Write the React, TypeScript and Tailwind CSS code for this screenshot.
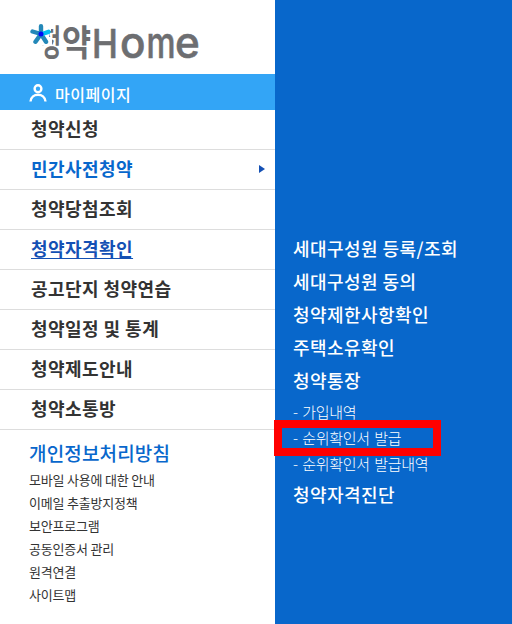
interface MenuItem {
  label: string;
  state?: 'hover' | 'active';
}

const menuItems: MenuItem[] = [
  { label: '청약신청' },
  { label: '민간사전청약', state: 'hover' },
  { label: '청약당첨조회' },
  { label: '청약자격확인', state: 'active' },
  { label: '공고단지 청약연습' },
  { label: '청약일정 및 통계' },
  { label: '청약제도안내' },
  { label: '청약소통방' },
];

const footerLinks = [
  '모바일 사용에 대한 안내',
  '이메일 추출방지정책',
  '보안프로그램',
  '공동인증서 관리',
  '원격연결',
  '사이트맵',
];

const subMenu = ['세대구성원 등록/조회', '세대구성원 동의', '청약제한사항확인', '주택소유확인', '청약통장'];

function Logo() {
  return (
    <svg width="180" height="68" viewBox="0 -14 180 68" className="block" fill="#6d6e71">
      <g fontFamily="'Noto Sans CJK KR', sans-serif" fontWeight="700">
        <text transform="translate(10.5 36) scale(0.62 1)" fontSize="36">청</text>
        <text transform="translate(32 36) scale(0.88 1)" fontSize="36">약</text>
      </g>
      <g fontFamily="Inter, sans-serif" fontWeight="500" stroke="#6d6e71" strokeWidth="0.6">
        <text transform="translate(62 38) scale(0.88 1)" fontSize="39.5">H</text>
        <text transform="translate(90 38) scale(0.98 1)" fontSize="43">o</text>
        <text transform="translate(116.5 38) scale(0.76 1)" fontSize="43">m</text>
        <text transform="translate(145 38) scale(0.98 1)" fontSize="43">e</text>
      </g>
      {/* Star replaces the first consonant */}
      <path d="M0 0H21V11H19V17H22V25H0Z" fill="#fff" />
      <g strokeWidth="4.4" strokeLinecap="round" fill="none">
        <path d="M11 14V6.2M11 14L2.5 11.5M11 14L5.5 21.8M11 14L16 21.8" stroke="#2388b8" />
        <path d="M12 14L18.6 11.8" stroke="#00bdf2" />
      </g>
      <circle cx="11" cy="14" r="2.5" fill="#0008f5" />
    </svg>
  );
}

function MenuRow({ label, state }: MenuItem) {
  const color =
    state === 'active' ? 'text-[#1450b4]' : state === 'hover' ? 'text-[#0867cc]' : 'text-[#333]';
  return (
    <li className="flex h-10 items-center justify-between border-b border-[#ddd] pr-[10px] pl-[31px]">
      <span
        className={`pb-[3px] text-[18px] leading-[26px] font-bold tracking-[0.45px] whitespace-nowrap ${color} ${
          state === 'active' ? 'underline decoration-1 underline-offset-2' : ''
        }`}
      >
        {label}
      </span>
      {state === 'hover' && (
        <svg width="6" height="8" viewBox="0 0 6 8" className="mb-px">
          <path d="M0 0L6 4L0 8Z" fill="#1450b4" />
        </svg>
      )}
    </li>
  );
}

export default function App() {
  return (
    <div className="flex h-[624px] w-[512px] overflow-hidden bg-white font-['Noto_Sans_CJK_KR',sans-serif]">
      <nav className="w-[275px] shrink-0">
        <div className="h-[74px] pt-1.5 pl-[30px]">
          <Logo />
        </div>
        <div className="flex h-9 items-center bg-[#33a5f6] pl-[29px] text-white">
          <svg width="18" height="18" viewBox="0 0 18 18" fill="none" stroke="currentColor" strokeWidth="2.4" className="mt-0.5">
            <circle cx="9" cy="4.7" r="3.4" />
            <path d="M1.5 17.5C2.2 8.5 15.8 8.5 16.5 17.5" />
          </svg>
          <span className="mt-1 ml-2 text-[16px] leading-6 font-medium tracking-[0.5px]">마이페이지</span>
        </div>
        <ul>
          {menuItems.map((item) => (
            <MenuRow key={item.label} {...item} />
          ))}
        </ul>
        <div className="pt-2 pl-[29px]">
          <h2 className="text-[19px] leading-[30px] font-medium tracking-[0.15px] text-[#0867cc]">개인정보처리방침</h2>
          <ul className="text-[13px] leading-[23px] tracking-[-0.2px] text-[#333]">
            {footerLinks.map((link) => (
              <li key={link}>{link}</li>
            ))}
          </ul>
        </div>
      </nav>

      <section className="flex-1 bg-[#0867cb] pt-[232px] pl-[18px] text-white">
        <ul className="text-[18px] leading-[33px] font-medium tracking-[0.45px]">
          {subMenu.map((label) => (
            <li key={label}>{label}</li>
          ))}
        </ul>
        <ul className="mt-0.5 text-[15px] leading-[26px] font-light tracking-[-0.3px] [word-spacing:1.5px]">
          <li>- 가입내역</li>
          <li className="relative">
            - 순위확인서 발급
            <span className="absolute -top-[5px] -left-[19px] h-9 w-[167px] border-8 border-[#f00]" />
          </li>
          <li>- 순위확인서 발급내역</li>
        </ul>
        <p className="mt-px text-[18px] leading-[33px] font-medium tracking-[0.45px]">청약자격진단</p>
      </section>
    </div>
  );
}
